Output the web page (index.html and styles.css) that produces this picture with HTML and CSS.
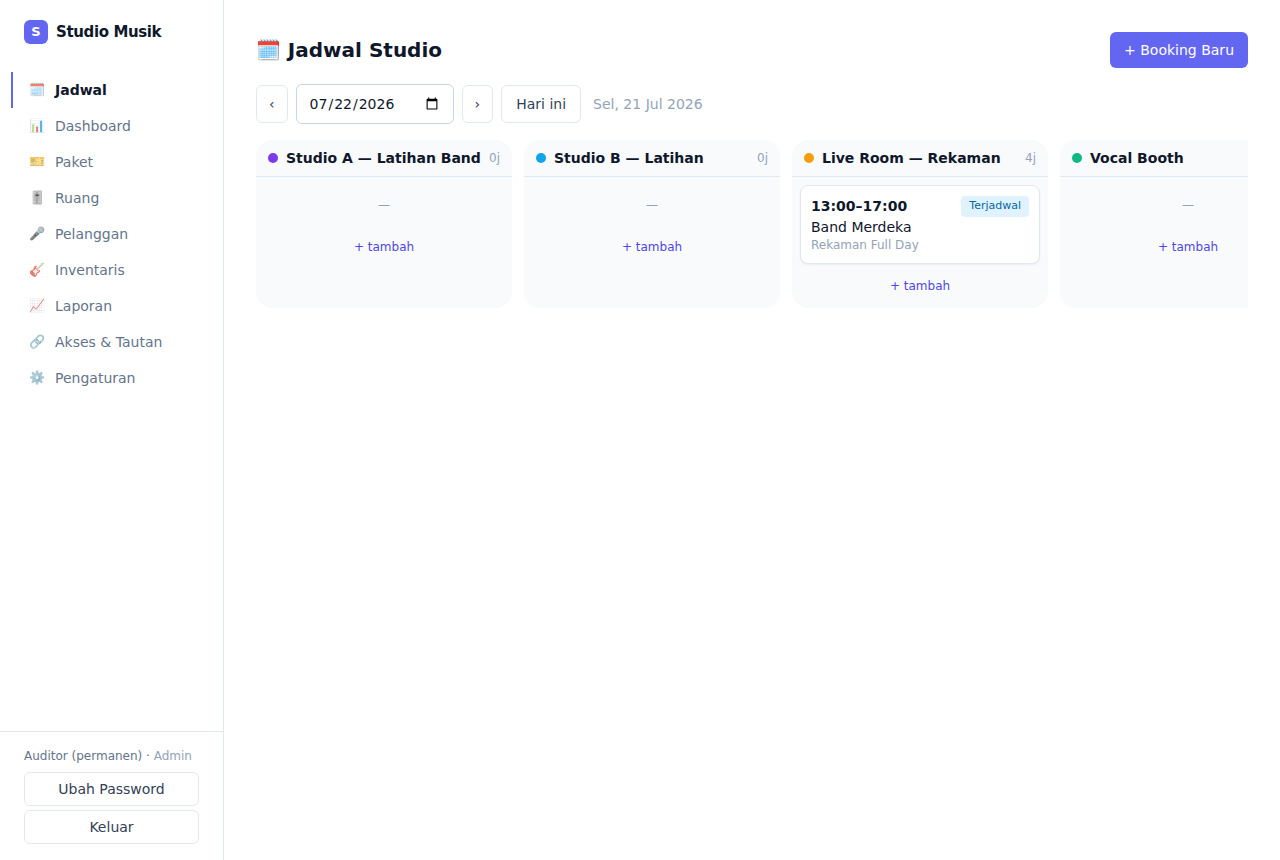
FILE: index.html
```html
<!DOCTYPE html>
<html lang="id">
<head>
<meta charset="utf-8">
<meta name="viewport" content="width=device-width, initial-scale=1">
<title>Jadwal Studio</title>
<link rel="stylesheet" href="styles.css">
</head>
<body>
<div class="app">
  <aside class="sidebar">
    <div class="brand"><span class="brand-mark">S</span><span class="brand-name">Studio Musik</span></div>
    <nav class="nav">
      <a class="nav-link active" href="#jadwal"><span class="nav-icon">🗓️</span>Jadwal</a>
      <a class="nav-link" href="#dashboard"><span class="nav-icon">📊</span>Dashboard</a>
      <a class="nav-link" href="#paket"><span class="nav-icon">🎫</span>Paket</a>
      <a class="nav-link" href="#ruang"><span class="nav-icon">🎚️</span>Ruang</a>
      <a class="nav-link" href="#pelanggan"><span class="nav-icon">🎤</span>Pelanggan</a>
      <a class="nav-link" href="#inventaris"><span class="nav-icon">🎸</span>Inventaris</a>
      <a class="nav-link" href="#laporan"><span class="nav-icon">📈</span>Laporan</a>
      <a class="nav-link" href="#akses"><span class="nav-icon">🔗</span>Akses &amp; Tautan</a>
      <a class="nav-link" href="#pengaturan"><span class="nav-icon">⚙️</span>Pengaturan</a>
    </nav>
    <div class="account">
      <div class="account-name">Auditor (permanen) · <span class="muted">Admin</span></div>
      <button class="btn btn-small" type="button">Ubah Password</button>
      <button class="btn btn-small" type="button">Keluar</button>
    </div>
  </aside>
  <main class="main">
    <header class="page-head">
      <h1 class="title">🗓️ Jadwal Studio</h1>
      <button class="btn-primary" type="button">+ Booking Baru</button>
    </header>
    <div class="toolbar">
      <button class="btn btn-step" type="button" aria-label="Hari sebelumnya">‹</button>
      <input class="date" type="date" value="2026-07-22" aria-label="Tanggal">
      <button class="btn btn-step" type="button" aria-label="Hari berikutnya">›</button>
      <button class="btn" type="button">Hari ini</button>
      <span class="date-label">Sel, 21 Jul 2026</span>
    </div>
    <div class="board">
      <section class="column">
        <header class="column-head"><span class="dot violet"></span><h2 class="column-title">Studio A — Latihan Band</h2><span class="hours">0j</span></header>
        <div class="column-body"><p class="empty">—</p><button class="add" type="button">+ tambah</button></div>
      </section>
      <section class="column">
        <header class="column-head"><span class="dot sky"></span><h2 class="column-title">Studio B — Latihan</h2><span class="hours">0j</span></header>
        <div class="column-body"><p class="empty">—</p><button class="add" type="button">+ tambah</button></div>
      </section>
      <section class="column">
        <header class="column-head"><span class="dot amber"></span><h2 class="column-title">Live Room — Rekaman</h2><span class="hours">4j</span></header>
        <div class="column-body">
          <article class="booking">
            <div class="booking-top"><span class="booking-time">13:00–17:00</span><span class="badge">Terjadwal</span></div>
            <div class="booking-name">Band Merdeka</div>
            <div class="booking-package">Rekaman Full Day</div>
          </article>
          <button class="add" type="button">+ tambah</button>
        </div>
      </section>
      <section class="column">
        <header class="column-head"><span class="dot green"></span><h2 class="column-title">Vocal Booth</h2></header>
        <div class="column-body"><p class="empty">—</p><button class="add" type="button">+ tambah</button></div>
      </section>
    </div>
  </main>
</div>
</body>
</html>
```

FILE: styles.css
```css
* { box-sizing: border-box; }

body {
  margin: 0;
  background: #fff;
  color: #0f172a;
  font: 14px/20px "DejaVu Sans", "Noto Color Emoji", sans-serif;
}

h1, h2, p { margin: 0; }
button, input { font: inherit; margin: 0; }
button { cursor: pointer; }

.app { display: flex; min-height: 100vh; }

.sidebar {
  position: sticky;
  top: 0;
  display: flex;
  flex-direction: column;
  flex: 0 0 224px;
  height: 100vh;
  border-right: 1px solid #e2e8f0;
}

.brand {
  display: flex;
  align-items: center;
  gap: 8px;
  padding: 20px 24px;
}
.brand-mark {
  display: grid;
  place-items: center;
  width: 24px;
  height: 24px;
  border-radius: 6px;
  background: #6366f1;
  color: #fff;
  font-size: 13px;
  font-weight: 700;
}
.brand-name { font-size: 15px; font-weight: 700; letter-spacing: -0.025em; }

.nav { flex: 1; padding: 8px 11px; }
.nav-link {
  display: flex;
  align-items: center;
  gap: 8px;
  padding: 8px 14px;
  border-left: 2px solid transparent;
  color: #64748b;
  text-decoration: none;
}
.nav-link.active { border-color: #6366f1; color: #0f172a; font-weight: 600; }
.nav-icon { width: 20px; font-size: 13px; text-align: center; opacity: 0.7; }

.account {
  display: flex;
  flex-direction: column;
  gap: 4px;
  padding: 16px 24px;
  border-top: 1px solid #e2e8f0;
}
.account-name { padding-bottom: 4px; color: #64748b; font-size: 12px; line-height: 16px; }
.muted { color: #94a3b8; }

.btn {
  padding: 8px 14px;
  border: 1px solid #e2e8f0;
  border-radius: 6px;
  background: #fff;
  color: #334155;
}
.btn-small { padding: 6px 12px; }
.btn-step { padding: 8px 12px; }

.btn-primary {
  padding: 8px 14px;
  border: 0;
  border-radius: 6px;
  background: #6366f1;
  color: #fff;
}

.main { flex: 1; min-width: 0; padding: 32px; }
.page-head { display: flex; align-items: center; justify-content: space-between; margin-bottom: 16px; }
.title { font-size: 20px; line-height: 28px; font-weight: 700; }

.toolbar { display: flex; align-items: center; gap: 8px; margin-bottom: 16px; }
.date {
  height: 40px;
  padding: 8px 12px;
  border: 1px solid #cbd5e1;
  border-radius: 6px;
  background: #fff;
  color: #0f172a;
}
.date-label { margin-left: 4px; color: #94a3b8; }

.board { display: flex; gap: 12px; overflow-x: auto; scrollbar-width: none; }
.column { flex: 0 0 256px; border-radius: 16px; background: #f8fafc; }
.column-head {
  display: flex;
  align-items: center;
  gap: 8px;
  padding: 8px 12px;
  border-bottom: 1px solid #e2e8f0;
}
.dot { flex: none; width: 10px; height: 10px; border-radius: 50%; }
.violet { background: #7c3aed; }
.sky { background: #0ea5e9; }
.amber { background: #f59e0b; }
.green { background: #10b981; }
.column-title { flex: 1; font-size: 14px; line-height: 20px; font-weight: 600; white-space: nowrap; }
.hours { color: #94a3b8; font-size: 12px; line-height: 16px; }
.column-body { display: flex; flex-direction: column; gap: 8px; padding: 8px; }
.empty { padding: 12px; color: #94a3b8; font-size: 12px; line-height: 16px; text-align: center; }
.add {
  padding: 6px;
  border: 0;
  background: none;
  color: #4f46e5;
  font-size: 12px;
  line-height: 16px;
}

.booking {
  padding: 10px;
  border: 1px solid #e2e8f0;
  border-radius: 8px;
  background: #fff;
  box-shadow: 0 1px 2px rgba(15, 23, 42, 0.06);
}
.booking-top { display: flex; align-items: flex-start; justify-content: space-between; }
.booking-time { font-weight: 600; }
.badge {
  padding: 2px 8px 3px;
  border-radius: 4px;
  background: #e0f2fe;
  color: #0369a1;
  font-size: 11px;
  line-height: 16px;
}
.booking-package { color: #94a3b8; font-size: 12px; line-height: 16px; }
```
